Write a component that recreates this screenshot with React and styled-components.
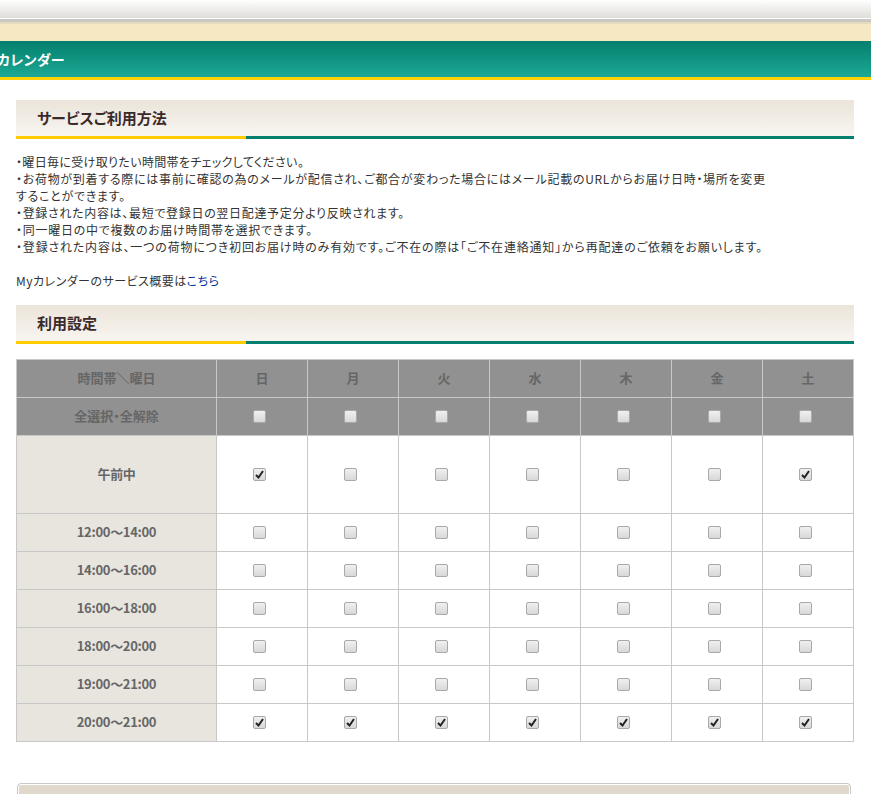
import React from "react";
import styled, { createGlobalStyle } from "styled-components";

const GlobalStyle = createGlobalStyle`
  html, body {
    margin: 0;
    padding: 0;
    background: #fff;
    overflow: hidden;
  }
  body {
    font-family: "Noto Sans CJK JP", "Liberation Sans", sans-serif;
    font-size: 12px;
    color: #333;
  }
`;

const Page = styled.div`
  width: 871px;
  height: 794px;
  overflow: hidden;
`;

const TopBar = styled.div`
  height: 18px;
  background: linear-gradient(#ffffff, #dfddd9);
  border-bottom: 1px solid #fff;
`;

const TopRule = styled.div`
  height: 5px;
  background: linear-gradient(#c9c7c1 0, #c9c7c1 60%, #e4dabd 60%);
`;

const NavStrip = styled.div`
  height: 17px;
  background: #f5e8c3;
`;

const TitleBar = styled.div`
  height: 36px;
  display: flex;
  align-items: center;
  background: linear-gradient(#047f6e, #1ca994);
  border-bottom: 3px solid #ffd200;
  overflow: hidden;
`;

const PageTitle = styled.h1`
  margin: 0 0 0 -3px;
  font-size: 14px;
  font-weight: 700;
  color: #fff;
  line-height: 1;
  letter-spacing: 0.4px;
  font-feature-settings: "palt";
`;

const Content = styled.main`
  padding: 20px 17px 0 16px;
`;

const SectionHead = styled.div`
  position: relative;
  height: 34px;
  display: flex;
  align-items: center;
  padding: 0 0 2px 21px;
  background: linear-gradient(#ebe4da, #f8f5f0);
  border-bottom: 3px solid #04806f;
  margin-bottom: ${(p) => p.$gap}px;

  &::after {
    content: "";
    position: absolute;
    left: 0;
    bottom: -3px;
    width: 230px;
    height: 3px;
    background: #ffcc00;
  }
`;

const SectionTitle = styled.h2`
  margin: 0;
  font-size: 15px;
  font-weight: 700;
  color: #3a2a2a;
  line-height: 1;
  font-feature-settings: "palt";
`;

const Guide = styled.div`
  font-size: 12px;
  line-height: 17px;
  color: #333;
  font-feature-settings: "palt";
`;

const GuideLine = styled.p`
  margin: 0;
  letter-spacing: ${(p) => p.$spacing}px;
  white-space: nowrap;
`;

const Summary = styled(GuideLine)`
  margin: 17px 0 16px;
`;

const MoreLink = styled.a`
  color: #003399;
  text-decoration: none;
`;

const Table = styled.table`
  width: 838px;
  table-layout: fixed;
  border-collapse: collapse;
  border: 1px solid #c8c8c8;
`;

const HeadCell = styled.th`
  height: 38px;
  padding: 0 0 3px;
  box-sizing: border-box;
  background: #919191;
  border: 1px solid #c8c8c8;
  color: #666;
  font-size: 13px;
  font-weight: 700;
  text-align: center;
  font-feature-settings: "palt";
`;

const LabelCell = styled.th`
  height: ${(p) => (p.$tall ? 78 : 38)}px;
  padding: 0 0 2px;
  box-sizing: border-box;
  background: #e8e5de;
  border: 1px solid #c8c8c8;
  color: #666;
  font-size: 13px;
  font-weight: 700;
  letter-spacing: -0.3px;
  text-align: center;
`;

const BoxCell = styled.td`
  padding: 0;
  background: #fff;
  border: 1px solid #c8c8c8;
  text-align: center;
  vertical-align: middle;
  line-height: 0;
`;

const SelectCell = styled(BoxCell)`
  background: #919191;
`;

const Box = styled.span`
  display: inline-flex;
  align-items: center;
  justify-content: center;
  vertical-align: middle;
  width: 11px;
  height: 11px;
  margin-right: 6px;
  border: 1px solid #a9a9a9;
  border-radius: 2px;
  background: linear-gradient(#f0f0f0, #d8d8d8);
  svg { display: block; }
`;

const BottomPanel = styled.div`
  margin-top: 41px;
  width: 832px;
  margin-left: 1px;
  height: 40px;
  background: #e0d9cb;
  border: 1px solid #c9c9c4;
  border-radius: 4px 4px 0 0;
  box-shadow: inset 0 0 0 1px #fff;
`;

const days = ["日", "月", "火", "水", "木", "金", "土"];

const slots = [
  { label: "午前中", tall: true, checked: [0, 6] },
  { label: "12:00〜14:00", checked: [] },
  { label: "14:00〜16:00", checked: [] },
  { label: "16:00〜18:00", checked: [] },
  { label: "18:00〜20:00", checked: [] },
  { label: "19:00〜21:00", checked: [] },
  { label: "20:00〜21:00", checked: [0, 1, 2, 3, 4, 5, 6] },
];

const guideLines = [
  { text: "・曜日毎に受け取りたい時間帯をチェックしてください。", spacing: 0.35 },
  { text: "・お荷物が到着する際には事前に確認の為のメールが配信され、ご都合が変わった場合にはメール記載のURLからお届け日時・場所を変更", spacing: 0.72 },
  { text: "することができます。", spacing: 0.72 },
  { text: "・登録された内容は、最短で登録日の翌日配達予定分より反映されます。", spacing: 0.68 },
  { text: "・同一曜日の中で複数のお届け時間帯を選択できます。", spacing: 0.72 },
  { text: "・登録された内容は、一つの荷物につき初回お届け時のみ有効です。ご不在の際は「ご不在連絡通知」から再配達のご依頼をお願いします。", spacing: 0.82 },
];

function CheckBox({ checked }) {
  return (
    <Box role="checkbox" aria-checked={checked}>
      {checked && (
        <svg width="11" height="11" viewBox="0 0 11 11">
          <path d="M2 6 L4.5 8.5 L9 2" fill="none" stroke="#222" strokeWidth="2" />
        </svg>
      )}
    </Box>
  );
}

export default function App() {
  return (
    <Page>
      <GlobalStyle />
      <TopBar />
      <TopRule />
      <NavStrip />
      <TitleBar>
        <PageTitle>カレンダー</PageTitle>
      </TitleBar>
      <Content>
        <SectionHead $gap={14}>
          <SectionTitle>サービスご利用方法</SectionTitle>
        </SectionHead>
        <Guide>
          {guideLines.map((line) => (
            <GuideLine key={line.text} $spacing={line.spacing}>{line.text}</GuideLine>
          ))}
          <Summary $spacing={0.47}>
            Myカレンダーのサービス概要は<MoreLink href="#">こちら</MoreLink>
          </Summary>
        </Guide>
        <SectionHead $gap={15}>
          <SectionTitle>利用設定</SectionTitle>
        </SectionHead>
        <Table>
          <colgroup>
            <col style={{ width: 200 }} />
            {days.map((d) => (
              <col key={d} style={{ width: 91 }} />
            ))}
          </colgroup>
          <thead>
            <tr>
              <HeadCell>時間帯＼曜日</HeadCell>
              {days.map((d) => (
                <HeadCell key={d}>{d}</HeadCell>
              ))}
            </tr>
            <tr>
              <HeadCell>全選択・全解除</HeadCell>
              {days.map((d) => (
                <SelectCell key={d}>
                  <CheckBox />
                </SelectCell>
              ))}
            </tr>
          </thead>
          <tbody>
            {slots.map((slot) => (
              <tr key={slot.label}>
                <LabelCell $tall={slot.tall}>{slot.label}</LabelCell>
                {days.map((d, i) => (
                  <BoxCell key={d}>
                    <CheckBox checked={slot.checked.includes(i)} />
                  </BoxCell>
                ))}
              </tr>
            ))}
          </tbody>
        </Table>
        <BottomPanel />
      </Content>
    </Page>
  );
}
